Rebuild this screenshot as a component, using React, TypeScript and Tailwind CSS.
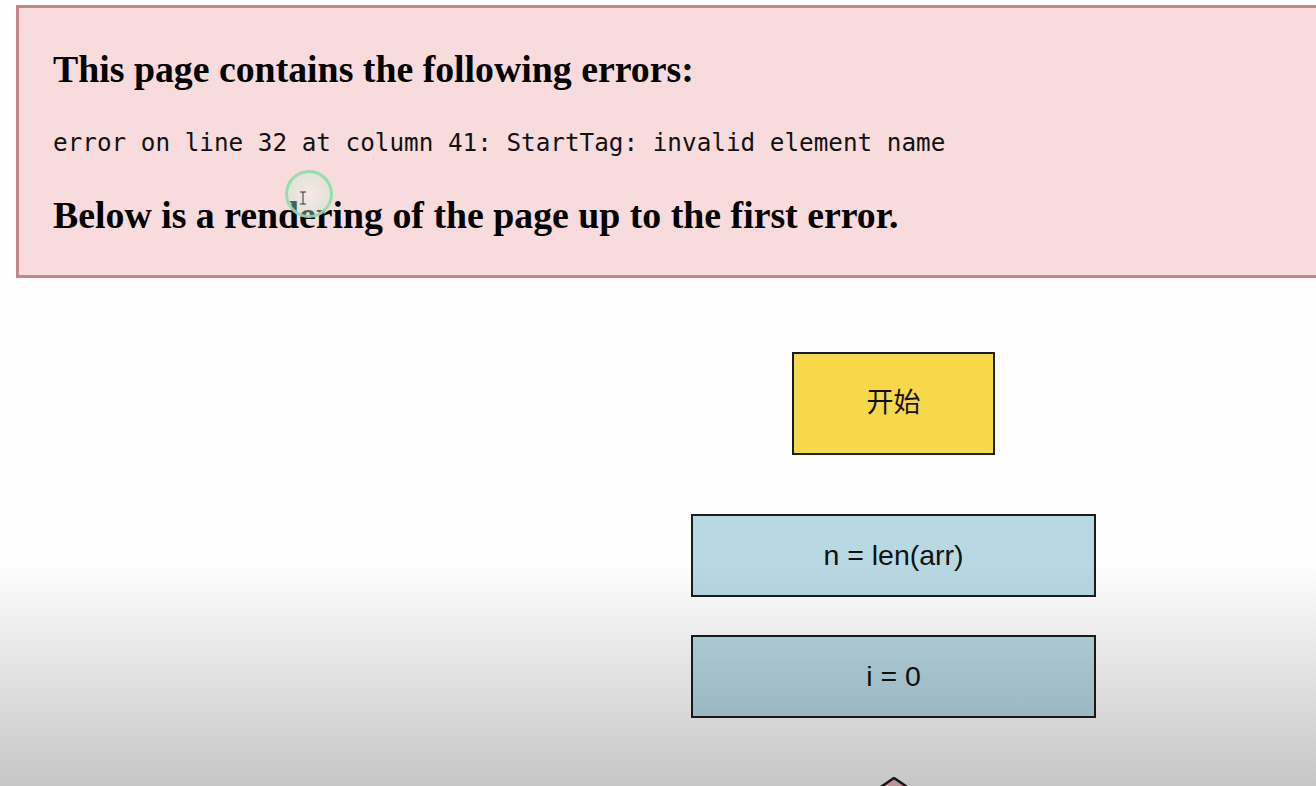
import { FC } from "react";

const serif = "font-['Liberation_Serif','Times_New_Roman',serif]";
const sans = "font-['Liberation_Sans',Arial,'Noto_Sans_CJK_SC',sans-serif]";

const ErrorBanner: FC = () => {
  return (
    <div className="ml-[16px] mt-[5px] w-[1320px] border-[3px] border-[#c4868a] bg-[#f8dcdd] pl-[34px] pt-[39px] pb-[38px] text-black">
      <h3 className={`${serif} text-[37.8px] font-bold leading-[44px]`}>
        This page contains the following errors:
      </h3>
      <p className="mt-[37px] font-['DejaVu_Sans_Mono',monospace] text-[24.3px] leading-[30px] text-[#111]">
        error on line 32 at column 41: StartTag: invalid element name
      </p>
      <h3 className={`${serif} mt-[35px] text-[37.8px] font-bold leading-[44px]`}>
        Below is a rendering of the page up to the first error.
      </h3>
    </div>
  );
};

const Flowchart: FC = () => {
  return (
    <div className="ml-[691px] mt-[74px] flex w-[405px] flex-col items-center">
      <div
        className={`flex h-[103px] w-[203px] items-center justify-center border-[2.5px] border-[#1c1c1c] bg-[#f7d84b] ${sans} text-[27px] text-[#111]`}
      >
        开始
      </div>
      <div
        className={`mt-[59px] flex h-[83px] w-[405px] items-center justify-center border-2 border-[#1c1c1c] bg-[#b8d8e4] ${sans} text-[28.5px] text-[#111]`}
      >
        n = len(arr)
      </div>
      <div
        className={`mt-[38px] flex h-[83px] w-[405px] items-center justify-center border-2 border-[#1c1c1c] bg-[#b8d8e4] ${sans} text-[28.5px] text-[#111]`}
      >
        i = 0
      </div>
      <svg width="220" height="150" viewBox="0 0 220 150" className="mt-[59px] shrink-0">
        <polygon
          points="110,1 219,75 110,149 1,75"
          fill="#f1bcc4"
          stroke="#1c1c1c"
          strokeWidth="2.5"
        />
      </svg>
    </div>
  );
};

const App: FC = () => {
  return (
    <div className="relative h-[786px] w-[1316px] overflow-hidden bg-[#fefefe]">
      <ErrorBanner />
      <Flowchart />
      {/* video-ish shading at the bottom */}
      <div className="pointer-events-none absolute inset-x-0 bottom-0 h-[224px] bg-gradient-to-b from-transparent to-black/[0.22]" />
      {/* click cursor highlight */}
      <div className="pointer-events-none absolute left-[285px] top-[170px] flex h-[48px] w-[48px] items-center justify-center rounded-full border-[3px] border-[#8fdcaa]/90 bg-[radial-gradient(circle,rgba(255,255,255,0.3),rgba(170,235,195,0.45))]">
        <svg width="8" height="14" viewBox="0 0 8 14" className="-ml-[12px] mt-[8px]">
          <path d="M1 1h6M4 1v12M1 13h6" stroke="#333" strokeWidth="1" fill="none" />
        </svg>
      </div>
    </div>
  );
};

export default App;
